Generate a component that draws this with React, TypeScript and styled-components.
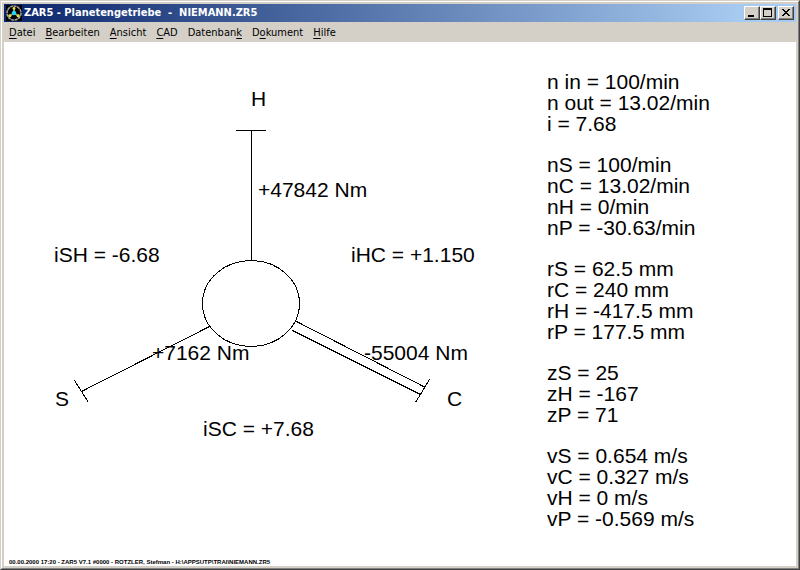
import React from "react";
import styled, { createGlobalStyle } from "styled-components";

const GlobalStyle = createGlobalStyle`
  * { box-sizing: border-box; }
  body { margin: 0; background: #d4d0c8; }
`;

const uiFont = `"DejaVu Sans Condensed", "DejaVu Sans", sans-serif`;
const plotFont = `"Liberation Sans", Arial, sans-serif`;

const Frame = styled.div`
  display: flex;
  flex-direction: column;
  min-height: 100vh;
  border: 1px solid;
  border-color: #d4d0c8 #404040 #404040 #d4d0c8;
`;

const Bevel = styled.div`
  flex: 1;
  display: flex;
  flex-direction: column;
  padding: 2px;
  background: #d4d0c8;
  border: 1px solid;
  border-color: #ffffff #808080 #808080 #ffffff;
`;

const TitleBar = styled.header`
  display: flex;
  align-items: center;
  height: 18px;
  padding-right: 2px;
  background: linear-gradient(90deg, #0a246a, #a6caf0 93%);
`;

const AppIcon = styled.svg`
  flex: none;
  width: 16px;
  height: 16px;
  margin: 0 2px;
`;

const Title = styled.h1`
  flex: 1;
  margin: 0;
  overflow: hidden;
  color: #ffffff;
  font: bold 11px/18px ${uiFont};
  white-space: pre;
`;

const WindowButton = styled.button<{ $apart?: boolean }>`
  display: flex;
  align-items: center;
  justify-content: center;
  width: 16px;
  height: 14px;
  margin-left: ${(p) => (p.$apart ? "2px" : "0")};
  padding: 0;
  background: #d4d0c8;
  border: 1px solid;
  border-color: #ffffff #404040 #404040 #ffffff;
  box-shadow: inset -1px -1px #808080;
`;

const MenuBar = styled.nav`
  display: flex;
  align-items: center;
  height: 20px;
  padding-top: 2px;
`;

const MenuItem = styled.button`
  padding: 0 5px;
  background: none;
  border: 0;
  color: #000000;
  font: 11px/18px ${uiFont};
  u { text-underline-offset: 2px; }
`;

const Client = styled.main`
  flex: 1;
  display: flex;
  flex-direction: column;
  background: #ffffff;
  color: #000000;
`;

const Sheet = styled.div`
  flex: 1;
  display: grid;
  grid-template-columns: minmax(0, 1fr) 250px;
  align-items: start;
`;

const Diagram = styled.svg`
  display: block;
  width: 100%;
  height: auto;
  fill: none;
  stroke: #000000;
  shape-rendering: crispEdges;
  text {
    fill: #000000;
    stroke: none;
    font: 21px ${plotFont};
  }
`;

const Values = styled.section`
  display: flex;
  flex-direction: column;
  gap: 20px;
  padding: 29px 0 0 1px;
`;

const Group = styled.div`
  font: 21px/21px ${plotFont};
  white-space: nowrap;
`;

const Line = styled.div``;

const Footer = styled.footer`
  padding: 0 5px;
  font: bold 6px/8px ${plotFont};
`;

const menu = [
  ["", "D", "atei"],
  ["", "B", "earbeiten"],
  ["", "A", "nsicht"],
  ["", "C", "AD"],
  ["Datenban", "k", ""],
  ["D", "o", "kument"],
  ["", "H", "ilfe"],
];

const groups = [
  ["n in = 100/min", "n out = 13.02/min", "i = 7.68"],
  ["nS = 100/min", "nC = 13.02/min", "nH = 0/min", "nP = -30.63/min"],
  ["rS = 62.5 mm", "rC = 240 mm", "rH = -417.5 mm", "rP = 177.5 mm"],
  ["zS = 25", "zH = -167", "zP = 71"],
  ["vS = 0.654 m/s", "vC = 0.327 m/s", "vH = 0 m/s", "vP = -0.569 m/s"],
];

const labels = [
  { x: 247, y: 64, text: "H" },
  { x: 254, y: 155, text: "+47842 Nm" },
  { x: 50, y: 220, text: "iSH = -6.68" },
  { x: 347, y: 220, text: "iHC = +1.150" },
  { x: 148, y: 318, text: "+7162 Nm" },
  { x: 360, y: 318, text: "-55004 Nm" },
  { x: 51, y: 364, text: "S" },
  { x: 443, y: 364, text: "C" },
  { x: 199, y: 394, text: "iSC = +7.68" },
];

function GearIcon() {
  return (
    <AppIcon viewBox="0 0 16 16" aria-hidden="true">
      <rect width="16" height="16" fill="#000000" />
      <circle cx="8" cy="8" r="7" fill="none" stroke="#a0a0a0" strokeWidth="1.6" strokeDasharray="3 .6" />
      <path d="M8 8V3M8 8L3.5 11M8 8L12.5 11" stroke="#909090" strokeWidth="2" />
      <circle cx="8" cy="8" r="2.2" fill="#20d8f0" />
      <circle cx="8" cy="3.4" r="1.4" fill="#e0e040" />
      <circle cx="3.8" cy="10.8" r="1.6" fill="#e0e040" />
      <circle cx="12.2" cy="10.8" r="1.6" fill="#e0e040" />
    </AppIcon>
  );
}

export default function App() {
  return (
    <Frame>
      <GlobalStyle />
      <Bevel>
        <TitleBar>
          <GearIcon />
          <Title>{"ZAR5 - Planetengetriebe  -  NIEMANN.ZR5"}</Title>
          <WindowButton aria-label="Minimieren">
            <svg width="12" height="10" shapeRendering="crispEdges"><path d="M2 7h6v2h-6z" /></svg>
          </WindowButton>
          <WindowButton aria-label="Maximieren">
            <svg width="12" height="10" shapeRendering="crispEdges">
              <path fillRule="evenodd" d="M1 0h9v9h-9zM2 2v6h7v-6z" />
            </svg>
          </WindowButton>
          <WindowButton aria-label="Schließen" $apart>
            <svg width="12" height="10" shapeRendering="crispEdges">
              <path d="M2 1h2v1h1v1h2v-1h1v-1h2v1h-1v1h-1v1h-1v1h1v1h1v1h1v1h-2v-1h-1v-1h-2v1h-1v1h-2v-1h1v-1h1v-1h1v-1h-1v-1h-1v-1h-1z" />
            </svg>
          </WindowButton>
        </TitleBar>
        <MenuBar>
          {menu.map(([before, key, after]) => (
            <MenuItem key={before + key + after}>
              {before}<u>{key}</u>{after}
            </MenuItem>
          ))}
        </MenuBar>
        <Client>
          <Sheet>
            <Diagram viewBox="0 0 542 500" role="img" aria-label="Planetengetriebe">
              <ellipse cx="247" cy="261.5" rx="48.5" ry="43" />
              <path d="M232 88.5h30M247.5 88v130" />
              <path d="M205.5 284.5L77.5 349.5M70.5 338.5L84.5 360.5" />
              <path d="M292.5 279.5L421.5 345.5M288.5 288.5L416.5 352.5M425.5 337.5L411.5 360.5" />
              {labels.map((l) => (
                <text key={l.text} x={l.x} y={l.y}>{l.text}</text>
              ))}
            </Diagram>
            <Values>
              {groups.map((g) => (
                <Group key={g[0]}>
                  {g.map((t) => <Line key={t}>{t}</Line>)}
                </Group>
              ))}
            </Values>
          </Sheet>
          <Footer>00.00.2000 17:20 - ZAR5 V7.1 #0000 - ROTZLER, Stefman - H:\APPSUTP\TRAI\NIEMANN.ZR5</Footer>
        </Client>
      </Bevel>
    </Frame>
  );
}
